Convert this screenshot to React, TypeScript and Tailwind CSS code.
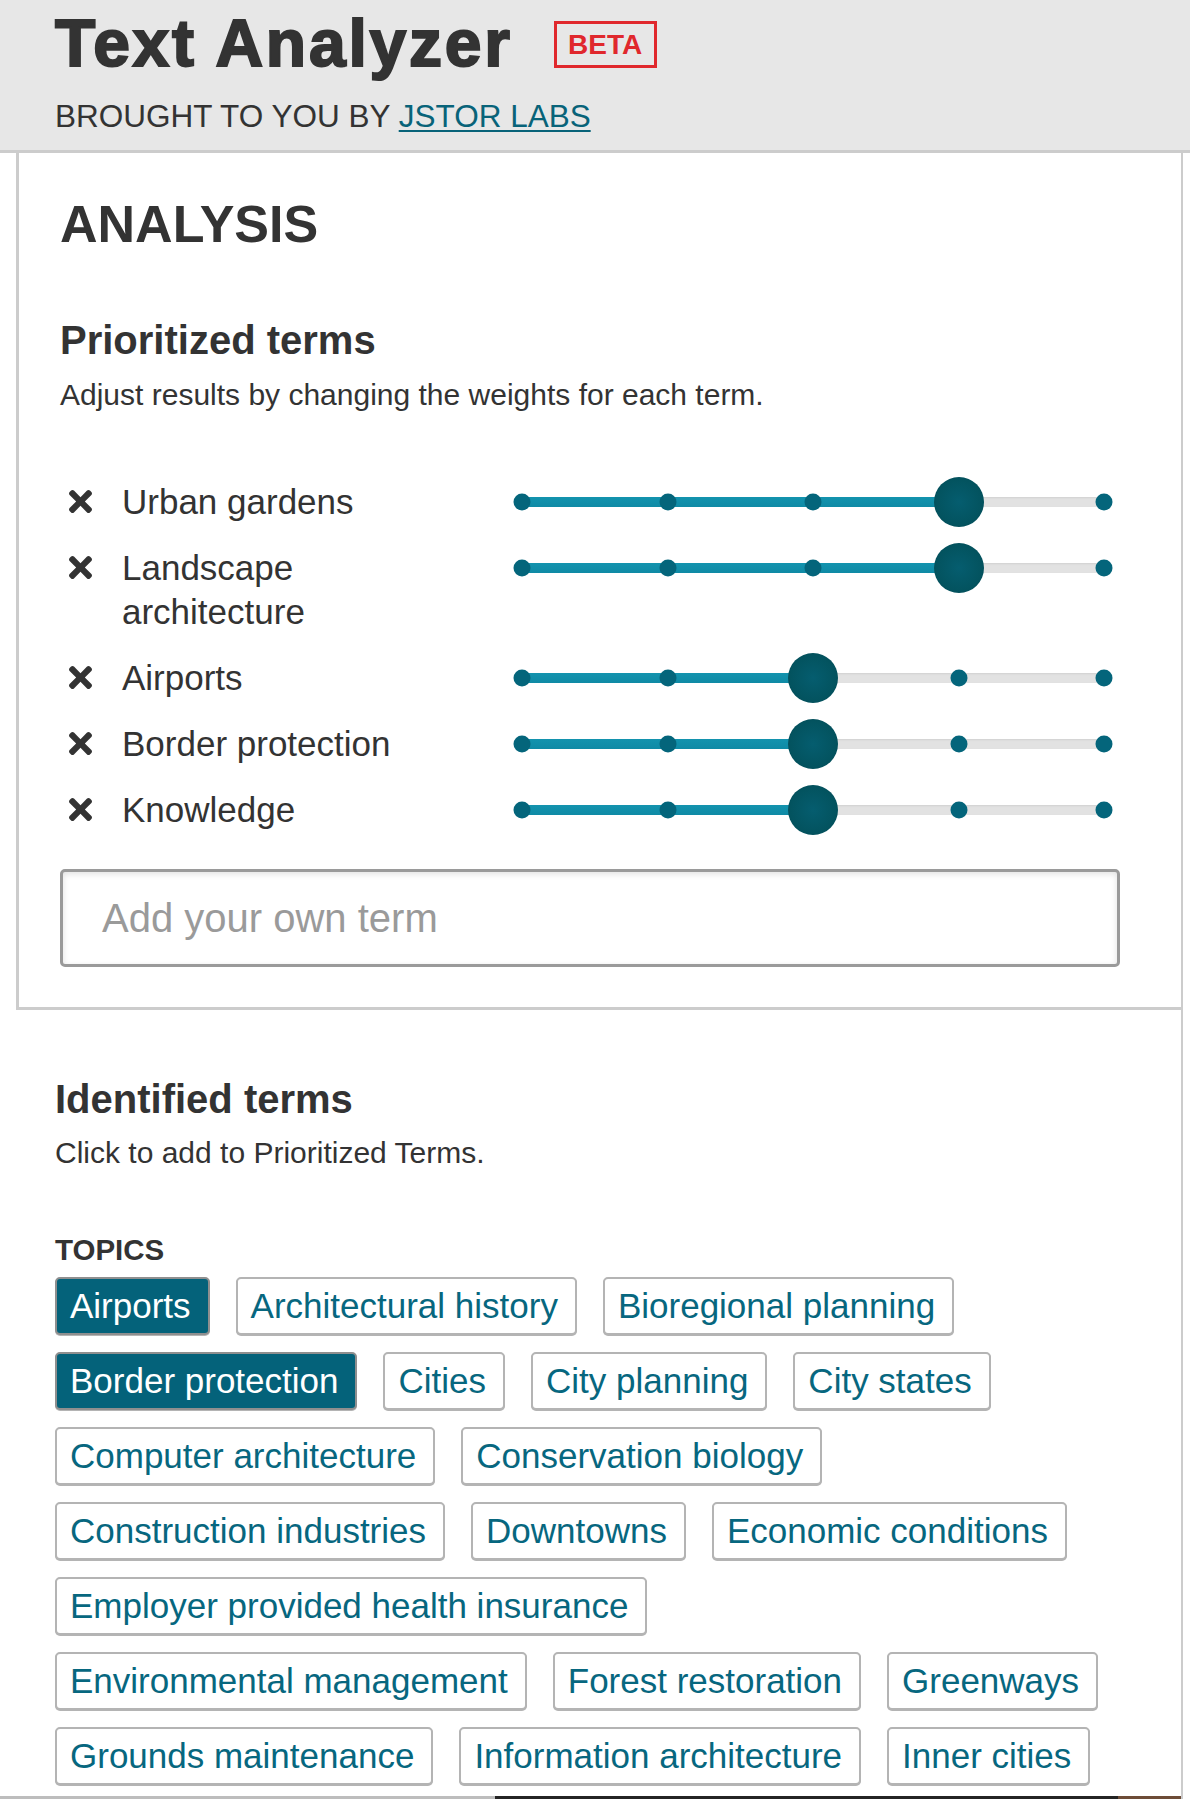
import React from "react";

type Term = { label: string; weight: number };

const prioritized: Term[] = [
  { label: "Urban gardens", weight: 3 },
  { label: "Landscape architecture", weight: 3 },
  { label: "Airports", weight: 2 },
  { label: "Border protection", weight: 2 },
  { label: "Knowledge", weight: 2 },
];

// rows as they wrap in the reference
const topics: { label: string; active?: boolean }[] = [
  { label: "Airports", active: true },
  { label: "Architectural history" },
  { label: "Bioregional planning" },
  { label: "Border protection", active: true },
  { label: "Cities" },
  { label: "City planning" },
  { label: "City states" },
  { label: "Computer architecture" },
  { label: "Conservation biology" },
  { label: "Construction industries" },
  { label: "Downtowns" },
  { label: "Economic conditions" },
  { label: "Employer provided health insurance" },
  { label: "Environmental management" },
  { label: "Forest restoration" },
  { label: "Greenways" },
  { label: "Grounds maintenance" },
  { label: "Information architecture" },
  { label: "Inner cities" },
];

function RemoveIcon() {
  return (
    <svg viewBox="0 80 352 352" className="h-[23px] w-[23px] fill-[#333333]">
      <path d="M242.72 256l100.07-100.07c12.28-12.28 12.28-32.19 0-44.48l-22.24-22.24c-12.28-12.28-32.19-12.28-44.48 0L176 189.28 75.93 89.21c-12.28-12.28-32.19-12.28-44.48 0L9.21 111.45c-12.28 12.28-12.28 32.19 0 44.48L109.28 256 9.21 356.07c-12.28 12.28-12.28 32.19 0 44.48l22.24 22.24c12.28 12.28 32.2 12.28 44.48 0L176 322.72l100.07 100.07c12.28 12.28 32.2 12.28 44.48 0l22.24-22.24c12.28-12.28 12.28-32.19 0-44.48L242.72 256z" />
    </svg>
  );
}

function WeightSlider({ value }: { value: number }) {
  const pct = (value / 4) * 100;
  return (
    <div className="relative h-[44px] w-[598px] shrink-0">
      <div className="absolute left-[8px] right-[8px] top-1/2 h-[10px] -translate-y-1/2 rounded-full bg-[#e2e2e2] shadow-[inset_0_1px_2px_rgba(0,0,0,0.08)]">
        <div
          className="h-full rounded-l-full bg-[linear-gradient(#1393ae,#0f8aa5)]"
          style={{ width: `${pct}%` }}
        />
        {[0, 1, 2, 3, 4].map((i) =>
          i === value ? null : (
            <span
              key={i}
              className="absolute top-1/2 h-[17px] w-[17px] -translate-x-1/2 -translate-y-1/2 rounded-full bg-[#04657b]"
              style={{ left: `${i * 25}%` }}
            />
          )
        )}
        <span
          className="absolute top-1/2 h-[50px] w-[50px] -translate-x-1/2 -translate-y-1/2 rounded-full bg-[radial-gradient(circle,#055d6f_0%,#03535f_65%,#013f4b_100%)]"
          style={{ left: `${pct}%` }}
        />
      </div>
    </div>
  );
}

export default function App() {
  return (
    <div className="min-h-[1799px] bg-white font-['Liberation_Sans',Arial,sans-serif] text-[#333333]">
      {/* header */}
      <header className="h-[153px] border-b-[3px] border-[#cccccc] bg-[#e7e7e7] pl-[55px] pt-[10px]">
        <div className="flex items-start">
          <h1 className="text-[66px] font-bold leading-none tracking-[2.75px] [-webkit-text-stroke:2px_#333333]">
            Text Analyzer
          </h1>
          <span className="ml-[41px] mt-[11px] flex h-[47px] w-[103px] items-center justify-center border-[3px] border-[#e0282d] text-[28px] font-bold leading-none text-[#e0282d]">
            BETA
          </span>
        </div>
        <p className="mt-[25px] text-[31.5px] leading-none">
          BROUGHT TO YOU BY{" "}
          <a className="text-[#086379] underline decoration-2 underline-offset-[3px]">JSTOR LABS</a>
        </p>
      </header>

      <div className="ml-[16px] w-[1167px] border-r-2 border-[#cccccc]">
        {/* analysis card */}
        <section className="border-b-[3px] border-l-[3px] border-[#cccccc] pb-[40px] pl-[41px] pr-[61px] pt-[45px]">
          <h2 className="text-[52px] font-bold leading-none">ANALYSIS</h2>
          <h3 className="mt-[70px] text-[40px] font-bold leading-none">Prioritized terms</h3>
          <p className="mt-[20px] text-[30px] leading-none">
            Adjust results by changing the weights for each term.
          </p>

          <div className="mt-[70px] flex flex-col gap-[22px]">
            {prioritized.map((t) => (
              <div key={t.label} className="flex items-start">
                <div className="flex w-[400px] shrink-0 items-start">
                  <span className="ml-[9px] mt-[10px] shrink-0">
                    <RemoveIcon />
                  </span>
                  <span className="ml-[30px] text-[35px] leading-[44px]">{t.label}</span>
                </div>
                <div className="ml-[54px]">
                  <WeightSlider value={t.weight} />
                </div>
              </div>
            ))}
          </div>

          <div className="mt-[37px] flex h-[98px] items-center rounded-[5px] border-[3px] border-[#9a9a9a] pl-[39px] shadow-[inset_0_2px_6px_rgba(0,0,0,0.12)]">
            <span className="text-[40px] leading-none text-[#9a9a9a]">Add your own term</span>
          </div>
        </section>

        {/* identified terms */}
        <section className="pl-[39px] pr-[40px] pt-[69px]">
          <h3 className="text-[40px] font-bold leading-none">Identified terms</h3>
          <p className="mt-[19px] text-[30px] leading-none">Click to add to Prioritized Terms.</p>
          <h4 className="mt-[67px] text-[29.5px] font-bold leading-none">TOPICS</h4>
          <div className="mt-[12px] flex flex-wrap gap-x-[26px] gap-y-[17px]">
            {topics.map((t) => (
              <span
                key={t.label}
                className={`flex h-[58px] items-center rounded-[5px] border-2 pl-[13px] pr-[17px] text-[35px] leading-none shadow-[0_1px_0_#b4b4b4] ${
                  t.active
                    ? "border-[#8f8f8f] bg-[#04627a] text-white"
                    : "border-[#b4b4b4] bg-white text-[#07677f]"
                }`}
              >
                {t.label}
              </span>
            ))}
          </div>
        </section>

        <div className="-ml-[16px] mt-[11px] flex h-[6px]">
          <div className="w-[495px] bg-[#bdbdbd]" />
          <div className="w-[623px] bg-[#242424]" />
          <div className="w-[63px] bg-[#6d4c37]" />
        </div>
      </div>
    </div>
  );
}
